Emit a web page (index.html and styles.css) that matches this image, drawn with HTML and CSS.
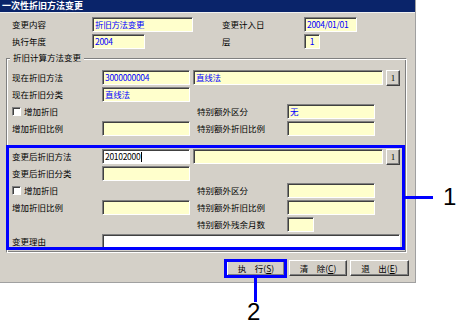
FILE: index.html
```html
<!DOCTYPE html>
<html lang="zh">
<head>
<meta charset="utf-8">
<link rel="stylesheet" href="styles.css">
</head>
<body>
<div class="stage">
  <div class="window">
    <div class="titlebar">一次性折旧方法变更</div>
    <div class="content">
      <div class="top">
        <div class="row">
          <span class="lbl w80">变更内容</span>
          <span class="field w101">折旧方法变更</span>
          <span class="sp w29"></span>
          <span class="lbl w82">变更计入日</span>
          <span class="field w53">2004/01/01</span>
        </div>
        <div class="row">
          <span class="lbl w80">执行年度</span>
          <span class="field w53">2004</span>
          <span class="sp w77"></span>
          <span class="lbl w82">层</span>
          <span class="field w16 center">1</span>
        </div>
      </div>

      <div class="group">
        <span class="legend">折旧计算方法变更</span>
        <div class="section">
          <div class="row">
            <span class="lbl w90">现在折旧方法</span>
            <span class="field w88">3000000004</span>
            <span class="field w190 ml3">直线法</span>
            <span class="btn-sm ml3">1</span>
          </div>
          <div class="row">
            <span class="lbl w90">现在折旧分类</span>
            <span class="field w88">直线法</span>
          </div>
          <div class="row">
            <span class="chkcell"><span class="chk"></span>增加折旧</span>
            <span class="sp w95"></span>
            <span class="lbl w90">特别额外区分</span>
            <span class="field w88">无</span>
          </div>
          <div class="row">
            <span class="lbl w90">增加折旧比例</span>
            <span class="field w88"></span>
            <span class="sp w7"></span>
            <span class="lbl w90">特别额外折旧比例</span>
            <span class="field w88"></span>
          </div>
        </div>

        <div class="section s2">
          <div class="row">
            <span class="lbl w90">变更后折旧方法</span>
            <span class="field white w88">20102000<span class="caret"></span></span>
            <span class="field w190 ml3"></span>
            <span class="btn-sm ml3">1</span>
          </div>
          <div class="row">
            <span class="lbl w90">变更后折旧分类</span>
            <span class="field w88"></span>
          </div>
          <div class="row">
            <span class="chkcell"><span class="chk"></span>增加折旧</span>
            <span class="sp w95"></span>
            <span class="lbl w90">特别额外区分</span>
            <span class="field w88"></span>
          </div>
          <div class="row">
            <span class="lbl w90">增加折旧比例</span>
            <span class="field w88"></span>
            <span class="sp w7"></span>
            <span class="lbl w90">特别额外折旧比例</span>
            <span class="field w88"></span>
          </div>
          <div class="row">
            <span class="sp w185"></span>
            <span class="lbl w90">特别额外残余月数</span>
            <span class="field w27"></span>
          </div>
          <div class="row">
            <span class="lbl w90">变更理由</span>
            <span class="field white w298"></span>
          </div>
        </div>
      </div>

      <div class="buttons">
        <span class="btn w58">执　行(<u>S</u>)</span>
        <span class="btn w58 ml4">清　除(<u>C</u>)</span>
        <span class="btn w59 ml3">退　出(<u>E</u>)</span>
      </div>
    </div>
  </div>

  <div class="mark box1"></div>
  <div class="mark line1"></div>
  <div class="num num1">1</div>
  <div class="mark box2"></div>
  <div class="mark line2"></div>
  <div class="num num2">2</div>
</div>
</body>
</html>
```

FILE: styles.css
```css
html, body {
  margin: 0;
  padding: 0;
  background: #ffffff;
}

body {
  font-family: "Noto Sans CJK SC", "Noto Sans", sans-serif;
}

.stage {
  position: relative;
  width: 456px;
  height: 329px;
}

.window {
  width: 416px;
  box-sizing: border-box;
  background: #d4d0c8;
  border-right: 1px solid #a0a0a0;
  border-bottom: 1px solid #a0a0a0;
}

.titlebar {
  height: 12px;
  line-height: 12px;
  background: #0a246a;
  color: #ffffff;
  font-size: 9px;
  font-weight: bold;
  padding-left: 2px;
  border-bottom: 1px solid #f0f0f0;
  white-space: nowrap;
}

.content {
  padding: 4px 0 6px 0;
}

.top {
  padding-left: 12px;
}

.row {
  display: flex;
  align-items: center;
  height: 15px;
}

.row + .row {
  margin-top: 2px;
}

.lbl {
  flex: none;
  font-size: 8.5px;
  line-height: 15px;
  color: #000000;
  white-space: nowrap;
}

.sp { flex: none; height: 1px; }

.w7 { width: 7px; }
.w16 { width: 16px; }
.w27 { width: 27px; }
.w29 { width: 29px; }
.w53 { width: 53px; }
.w58 { width: 58px; }
.w59 { width: 59px; }
.w77 { width: 77px; }
.w80 { width: 80px; }
.w82 { width: 82px; }
.w88 { width: 88px; }
.w90 { width: 90px; }
.w95 { width: 95px; }
.w101 { width: 101px; }
.w185 { width: 185px; }
.w190 { width: 190px; }
.w298 { width: 298px; }
.ml3 { margin-left: 3px; }
.ml4 { margin-left: 4px; }

.field {
  flex: none;
  box-sizing: border-box;
  height: 15px;
  border: 1px solid;
  border-color: #808080 #ffffff #ffffff #808080;
  box-shadow: inset 1px 1px 0 #404040;
  background: #ffffcc;
  color: #0000ff;
  font-size: 8.5px;
  line-height: 13px;
  padding-left: 2px;
  overflow: hidden;
  white-space: nowrap;
  letter-spacing: -0.3px;
}

.field.center {
  text-align: center;
  padding-left: 0;
}

.field.white {
  background: #ffffff;
  color: #000000;
}

.caret {
  display: inline-block;
  width: 1px;
  height: 10px;
  background: #000000;
  vertical-align: -2px;
  margin-left: 1px;
}

.btn-sm {
  flex: none;
  box-sizing: border-box;
  width: 14px;
  height: 16px;
  align-self: flex-start;
  border: 1px solid;
  border-color: #ffffff #404040 #404040 #ffffff;
  box-shadow: inset -1px -1px 0 #808080;
  background: #d4d0c8;
  font-family: "Liberation Serif", serif;
  font-size: 9px;
  line-height: 14px;
  text-align: center;
  color: #000000;
}

.chkcell {
  flex: none;
  width: 90px;
  display: flex;
  align-items: center;
  font-size: 8.5px;
  line-height: 15px;
  white-space: nowrap;
}

.chk {
  flex: none;
  box-sizing: border-box;
  width: 9px;
  height: 9px;
  margin-right: 3px;
  background: #ffffff;
  border: 1px solid;
  border-color: #808080 #ffffff #ffffff #808080;
  box-shadow: inset 1px 1px 0 #404040;
}

.group {
  position: relative;
  margin: 9px 8px 0 6px;
  border: 1px solid;
  border-color: #808080 #ffffff #ffffff #808080;
  box-shadow: inset 1px 1px 0 #ffffff, inset -1px -1px 0 #808080;
  padding: 11px 0 3px 5px;
}

.legend {
  position: absolute;
  left: 3px;
  top: -7px;
  padding: 0 3px;
  background: #d4d0c8;
  font-size: 8.5px;
  line-height: 11px;
  white-space: nowrap;
}

.section.s2 {
  margin-top: 13px;
}

.buttons {
  display: flex;
  justify-content: flex-end;
  padding-right: 6px;
  margin-top: 7px;
}

.btn {
  flex: none;
  box-sizing: border-box;
  height: 16px;
  border: 1px solid;
  border-color: #ffffff #404040 #404040 #ffffff;
  box-shadow: inset -1px -1px 0 #808080;
  background: #d4d0c8;
  font-size: 8.5px;
  line-height: 14px;
  text-align: center;
  white-space: nowrap;
}

.mark {
  position: absolute;
  box-sizing: border-box;
}

.box1 {
  left: 6px;
  top: 145px;
  width: 399px;
  height: 105px;
  border: 3px solid #0000ff;
}

.line1 {
  left: 405px;
  top: 196px;
  width: 28px;
  height: 3px;
  background: #0000ff;
}

.box2 {
  left: 224px;
  top: 259px;
  width: 63px;
  height: 19px;
  border: 3px solid #0000ff;
}

.line2 {
  left: 254px;
  top: 278px;
  width: 3px;
  height: 24px;
  background: #0000ff;
}

.num {
  position: absolute;
  font-family: "Liberation Sans", Arial, sans-serif;
  font-size: 24px;
  line-height: 24px;
  color: #000000;
}

.num1 {
  left: 443px;
  top: 185px;
}

.num2 {
  left: 247px;
  top: 300px;
}
```
